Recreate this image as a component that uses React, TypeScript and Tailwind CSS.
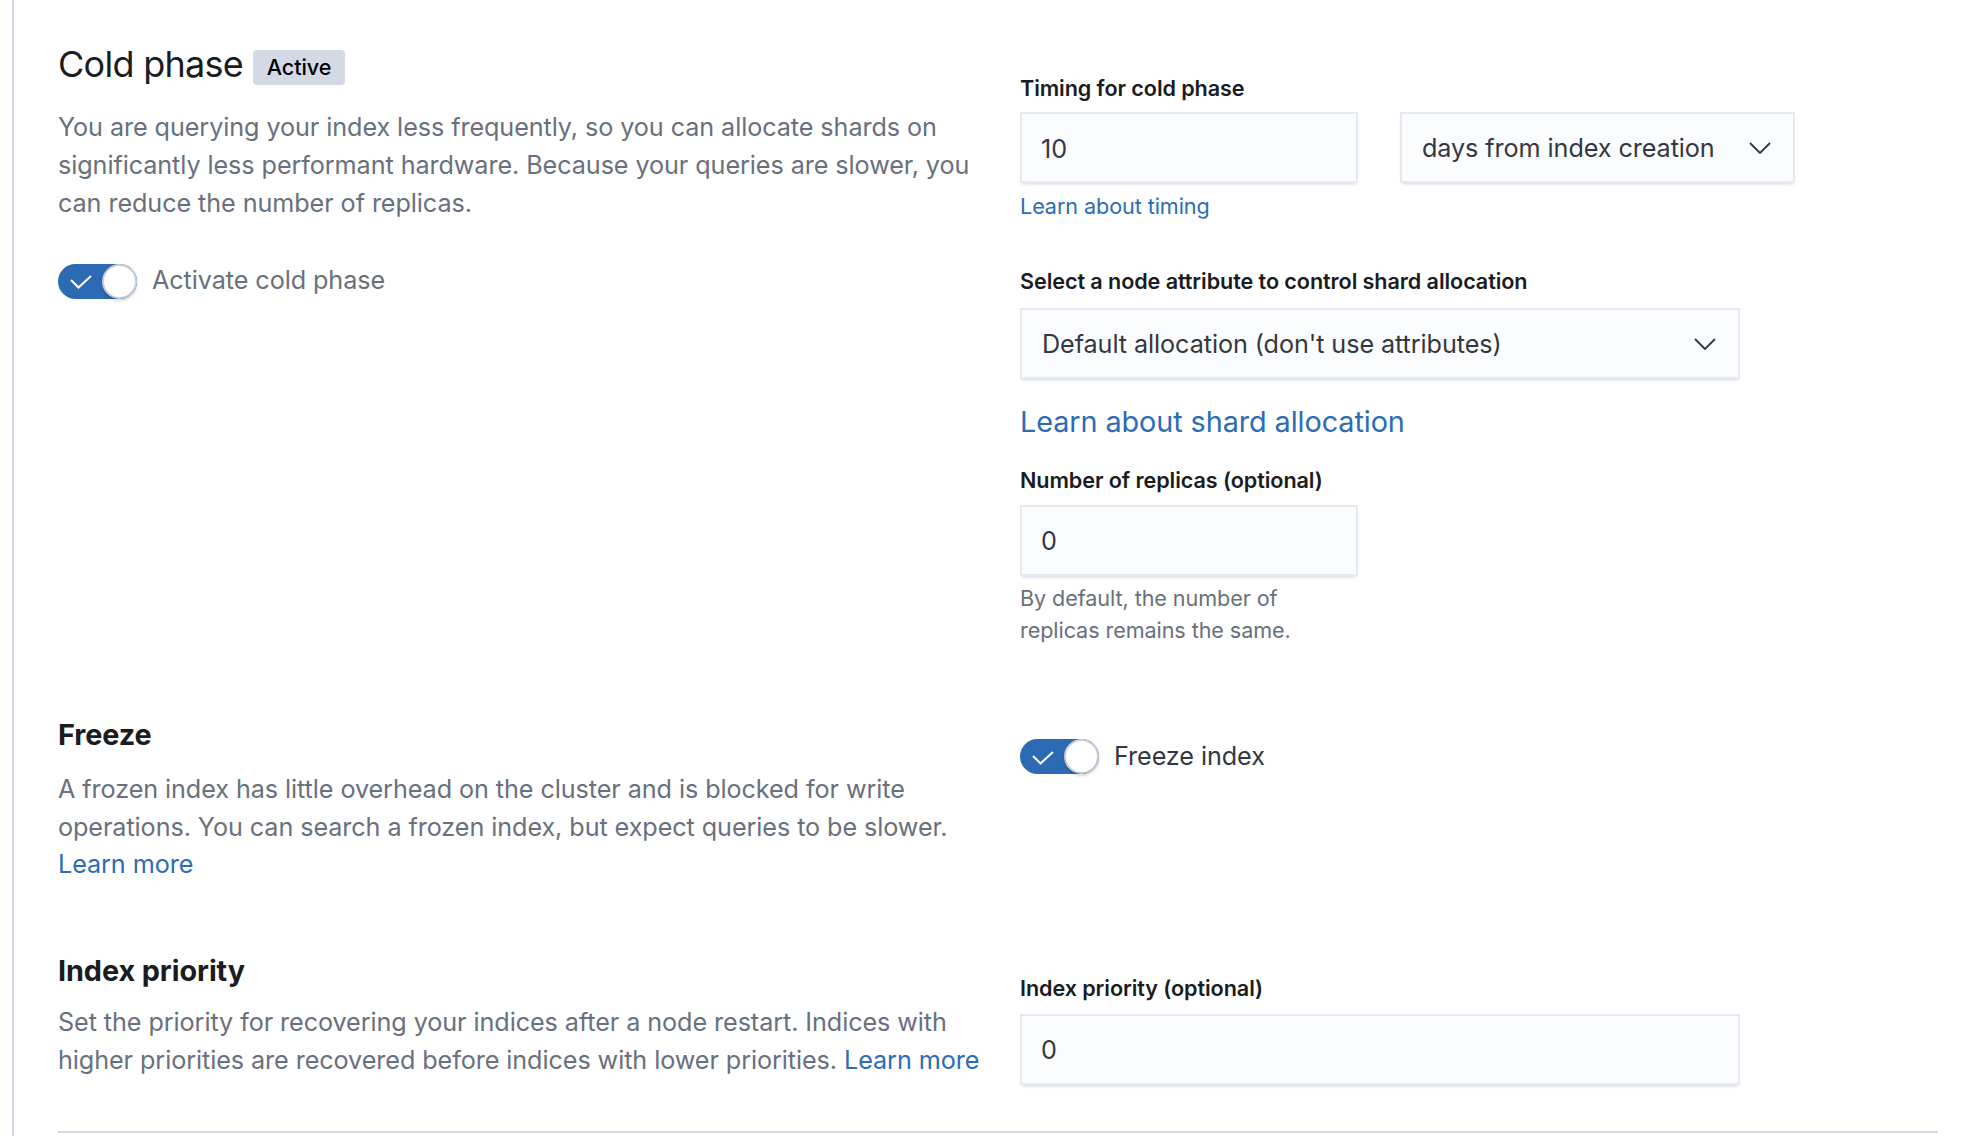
import React from "react";

function FieldLabel({ children, className = "" }: { children: React.ReactNode; className?: string }) {
  return (
    <div className={`text-[21.6px] leading-[32.4px] font-semibold text-[#1a1c21] ${className}`}>
      {children}
    </div>
  );
}

function TextField({ value, className = "" }: { value: string; className?: string }) {
  return (
    <div
      className={`flex h-[71px] items-center border-2 border-[#e6e9f0] bg-[#fbfcfd] pl-[19px] pt-[3px] text-[25.2px] text-[#343741] shadow-[0_3px_3px_-2px_rgba(152,162,179,0.45)] ${className}`}
    >
      {value}
    </div>
  );
}

function SelectField({ value, className = "" }: { value: string; className?: string }) {
  return (
    <div
      className={`flex h-[71px] items-center justify-between border-2 border-[#e6e9f0] bg-[#fbfcfd] pl-[20px] pr-[22px] text-[25.2px] text-[#343741] shadow-[0_3px_3px_-2px_rgba(152,162,179,0.45)] ${className}`}
    >
      <span className="pt-[2px]">{value}</span>
      <svg width="22" height="12" viewBox="0 0 22 12" fill="none">
        <path d="M1 1 L11 11 L21 1" stroke="#343741" strokeWidth="1.8" />
      </svg>
    </div>
  );
}

function Toggle({ label, muted = false }: { label: string; muted?: boolean }) {
  return (
    <div className="flex items-center">
      <span className="flex h-[35px] w-[79px] shrink-0 items-center justify-between rounded-full bg-[#2c6bb3]">
        <svg className="ml-[12px] mt-[2px]" width="22" height="14" viewBox="0 0 22 14" fill="none">
          <path d="M1 5 L8.5 12.5 L21 1" stroke="white" strokeWidth="2" />
        </svg>
        <span className="h-[35px] w-[35px] rounded-full border-2 border-[#c9ced6] bg-white shadow-[0_2px_3px_rgba(0,0,0,0.15)]" />
      </span>
      <span
        className={`ml-[15px] text-[25.2px] leading-[37.8px] ${muted ? "text-[#69707d]" : "text-[#343741]"}`}
      >
        {label}
      </span>
    </div>
  );
}

const linkClass = "text-[#2c6cb4] hover:underline";

export default function App() {
  return (
    <div className="min-h-[1136px] bg-white font-['Inter',sans-serif] tracking-[-0.005em] antialiased">
      <div className="ml-[12px] min-h-[1136px] border-l-2 border-[#d3dae6] pl-[44px] pr-[42px] pt-[43px]">
        {/* Cold phase */}
        <div className="grid grid-cols-[930px_1fr] gap-x-[32px]">
          <div>
            <div className="flex items-start">
              <h2 className="text-[36px] leading-[43px] font-normal tracking-[-0.02em] text-[#1a1c21]">
                Cold phase
              </h2>
              <span className="ml-[10px] mt-[7px] flex h-[35px] w-[92px] items-center justify-center rounded-[4px] bg-[#d3dae6] text-[21.6px] font-medium text-black">
                Active
              </span>
            </div>
            <p className="mt-[23px] text-[25.2px] leading-[37.8px] text-[#69707d]">
              You are querying your index less frequently, so you can allocate shards on significantly less
              performant hardware. Because your queries are slower, you can reduce the number of replicas.
            </p>
            <div className="mt-[40px]">
              <Toggle label="Activate cold phase" muted />
            </div>
          </div>

          <div className="pt-[29px]">
            <FieldLabel>Timing for cold phase</FieldLabel>
            <div className="mt-[8px] flex">
              <TextField value="10" className="w-[338px]" />
              <SelectField value="days from index creation" className="ml-[42px] w-[395px]" />
            </div>
            <a href="#" className={`mt-[7px] block w-fit text-[21.6px] leading-[32.4px] ${linkClass}`}>
              Learn about timing
            </a>

            <FieldLabel className="mt-[42px]">Select a node attribute to control shard allocation</FieldLabel>
            <SelectField value="Default allocation (don't use attributes)" className="mt-[11px] w-[720px]" />
            <a href="#" className={`mt-[21px] block w-fit text-[28.8px] leading-[43.2px] ${linkClass}`}>
              Learn about shard allocation
            </a>

            <FieldLabel className="mt-[21px]">Number of replicas (optional)</FieldLabel>
            <TextField value="0" className="mt-[8px] w-[338px]" />
            <p className="mt-[6px] w-[338px] text-[21.6px] leading-[32.4px] text-[#69707d]">
              By default, the number of replicas remains the same.
            </p>
          </div>
        </div>

        {/* Freeze */}
        <div className="mt-[66px] grid grid-cols-[930px_1fr] gap-x-[32px]">
          <div>
            <h3 className="text-[28.8px] leading-[43.2px] font-bold text-[#1a1c21]">Freeze</h3>
            <p className="mt-[15px] text-[25.2px] leading-[37.8px] text-[#69707d]">
              A frozen index has little overhead on the cluster and is blocked for write operations. You can
              search a frozen index, but expect queries to be slower.{" "}
              <a href="#" className={linkClass}>
                Learn more
              </a>
            </p>
          </div>
          <div className="pt-[25px]">
            <Toggle label="Freeze index" />
          </div>
        </div>

        {/* Index priority */}
        <div className="mt-[65px] grid grid-cols-[930px_1fr] gap-x-[32px]">
          <div>
            <h3 className="text-[28.8px] leading-[43.2px] font-bold text-[#1a1c21]">Index priority</h3>
            <p className="mt-[12px] text-[25.2px] leading-[37.8px] text-[#69707d]">
              Set the priority for recovering your indices after a node restart. Indices with higher
              priorities are recovered before indices with lower priorities.{" "}
              <a href="#" className={linkClass}>
                Learn more
              </a>
            </p>
          </div>
          <div className="pt-[23px]">
            <FieldLabel>Index priority (optional)</FieldLabel>
            <TextField value="0" className="mt-[9px] w-[720px]" />
          </div>
        </div>

        <div className="mt-[46px] h-[2px] bg-[#d3dae6]" />
      </div>
    </div>
  );
}
